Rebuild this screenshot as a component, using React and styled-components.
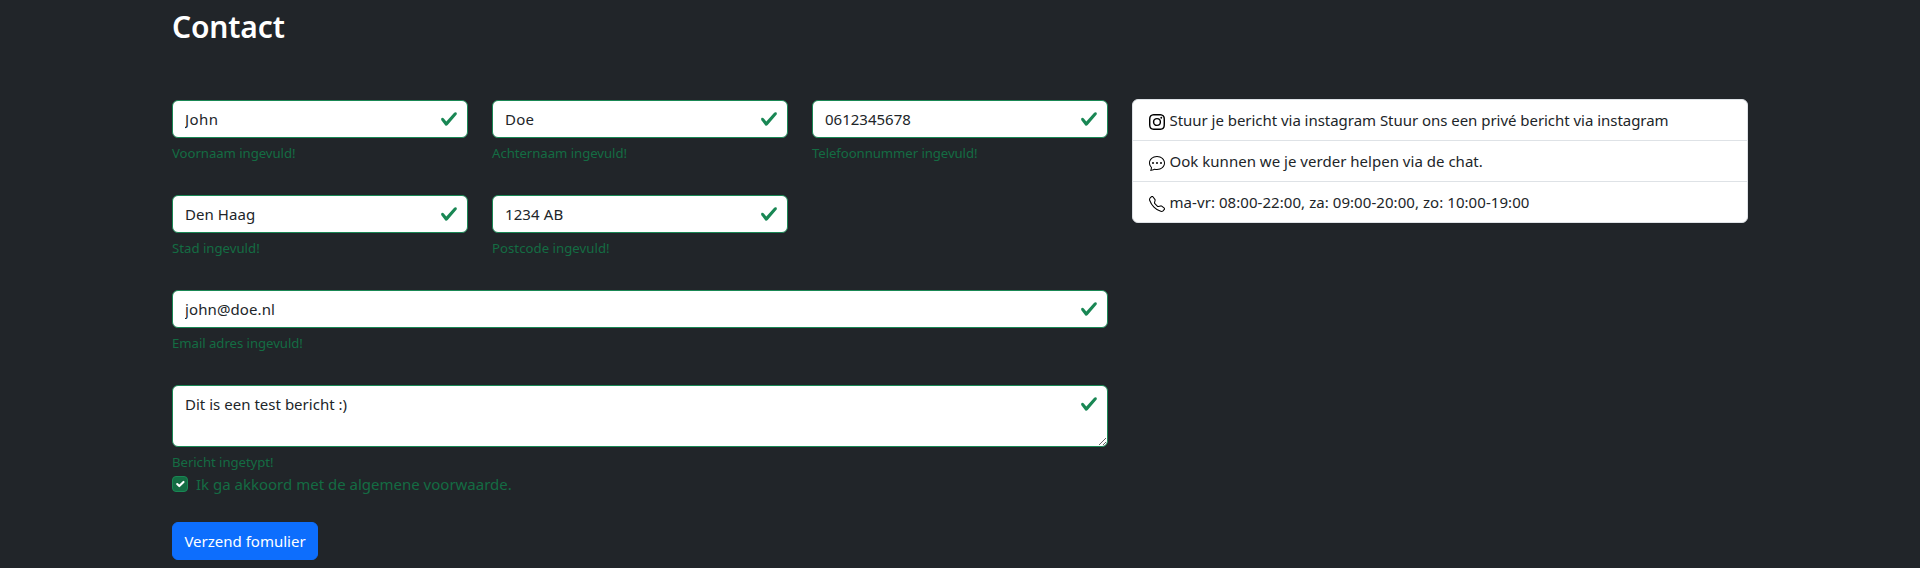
import React from 'react';
import styled, { createGlobalStyle } from 'styled-components';
import { BsInstagram, BsChatDots, BsTelephone } from 'react-icons/bs';

const GlobalStyle = createGlobalStyle`
  *, *::before, *::after { box-sizing: border-box; }
  html { background: #212529; overflow: hidden; }
  body {
    margin: 0;
    background: #212529;
    color: #212529;
    font-family: "Noto Sans", "Open Sans", sans-serif;
    font-size: 15px;
    line-height: 24px;
  }
`;

const Container = styled.main`
  width: 1600px;
  height: 568px;
  margin: 0 auto;
  padding: 8px 12px 0;
  overflow: hidden;
`;

const Title = styled.h2`
  margin: 0;
  height: 38px;
  color: #fff;
  font-size: 30px;
  font-weight: 600;
  line-height: 38px;
  letter-spacing: -0.15px;
`;

const Columns = styled.div`
  display: flex;
  align-items: flex-start;
  gap: 24px;
  padding-top: 53px;
`;

const Form = styled.form`
  width: 936px;
  padding-top: 1px;
`;

const FieldRow = styled.div`
  display: grid;
  grid-template-columns: ${(p) => (p.$full ? '1fr' : 'repeat(3, 1fr)')};
  column-gap: 24px;
  margin-bottom: ${(p) => (p.$last ? 0 : 32)}px;
`;

const ControlBox = styled.div`
  position: relative;
  display: flex;
`;

const Input = styled.input`
  width: 100%;
  height: ${(p) => p.$height || 38}px;
  margin: 0;
  padding: 6px 36px 6px 12px;
  border: 1px solid #198754;
  border-radius: 6px;
  outline: 0;
  background: #fff;
  color: #212529;
  font: inherit;
  letter-spacing: ${(p) => p.$spacing || 0}px;
  resize: vertical;
`;

const ValidMark = styled.svg`
  position: absolute;
  top: 10px;
  right: 10px;
  width: 18px;
  height: 18px;
  fill: #198754;
`;

const Feedback = styled.div`
  padding-top: 5px;
  height: 25px;
  color: #146c43;
  font-size: 13.2px;
  line-height: 21px;
  letter-spacing: ${(p) => p.$spacing || 0}px;
`;

const Agreement = styled.label`
  display: flex;
  align-items: flex-start;
  gap: 8px;
  height: 24px;
  color: #146c43;
`;

const CheckBox = styled.span`
  display: flex;
  width: 16px;
  height: 16px;
  margin-top: 4px;
  border: 1px solid #198754;
  border-radius: 4px;
  background: #146c43;

  svg { width: 14px; height: 14px; }
`;

const SubmitButton = styled.button`
  width: 146px;
  height: 38px;
  margin-top: 26px;
  padding: 0;
  border: 1px solid #0d6efd;
  border-radius: 6px;
  background: #0d6efd;
  color: #fff;
  font: inherit;
`;

const InfoList = styled.ul`
  width: 616px;
  margin: 0;
  padding: 0;
  list-style: none;
  overflow: hidden;
  border: 1px solid #dee2e6;
  border-radius: 6px;
  background: #fff;
`;

const InfoItem = styled.li`
  display: flex;
  align-items: flex-start;
  gap: 4.5px;
  padding: 8px 16px;
  height: 41px;
  white-space: nowrap;
  letter-spacing: ${(p) => p.$spacing || 0}px;

  & + & { border-top: 1px solid #dee2e6; }
  &:first-child { height: 40px; }

  svg { width: 16px; height: 16px; margin-top: 6px; flex: none; color: #000; }
`;

function Field({ value, message, spacing, messageSpacing, multiline }) {
  return (
    <div>
      <ControlBox>
        <Input
          as={multiline ? 'textarea' : 'input'}
          defaultValue={value}
          $spacing={spacing}
          $height={multiline ? 62 : 38}
        />
        <ValidMark viewBox="0 0 8 8">
          <path d="M2.3 6.73.6 4.53c-.4-1.04.46-1.4 1.1-.8l1.1 1.4 3.4-3.8c.6-.63 1.6-.27 1.2.7l-4 4.6c-.43.5-.8.4-1.1.1z" />
        </ValidMark>
      </ControlBox>
      <Feedback $spacing={messageSpacing}>{message}</Feedback>
    </div>
  );
}

export default function App() {
  return (
    <>
      <GlobalStyle />
      <Container>
        <Title>Contact</Title>
        <Columns>
          <Form onSubmit={(e) => e.preventDefault()}>
            <FieldRow>
              <Field value="John" spacing={0.4} message="Voornaam ingevuld!" messageSpacing={-0.06} />
              <Field value="Doe" spacing={0.2} message="Achternaam ingevuld!" messageSpacing={-0.05} />
              <Field value="0612345678" message="Telefoonnummer ingevuld!" messageSpacing={-0.08} />
            </FieldRow>
            <FieldRow>
              <Field value="Den Haag" spacing={0.05} message="Stad ingevuld!" />
              <Field value="1234 AB" spacing={0.1} message="Postcode ingevuld!" messageSpacing={0.03} />
            </FieldRow>
            <FieldRow $full>
              <Field value="john@doe.nl" spacing={0.1} message="Email adres ingevuld!" messageSpacing={-0.05} />
            </FieldRow>
            <FieldRow $full $last>
              <Field multiline value="Dit is een test bericht :)" spacing={0.02} message="Bericht ingetypt!" messageSpacing={-0.06} />
            </FieldRow>
            <Agreement>
              <CheckBox>
                <svg viewBox="0 0 20 20" fill="none" stroke="#fff" strokeWidth="3" strokeLinecap="round" strokeLinejoin="round">
                  <path d="m6 10 3 3 6-6" />
                </svg>
              </CheckBox>
              <span>Ik ga akkoord met de algemene voorwaarde.</span>
            </Agreement>
            <SubmitButton type="submit">Verzend fomulier</SubmitButton>
          </Form>
          <InfoList>
            <InfoItem $spacing={-0.035}>
              <BsInstagram />
              <span>Stuur je bericht via instagram Stuur ons een privé bericht via instagram</span>
            </InfoItem>
            <InfoItem $spacing={0.02}>
              <BsChatDots />
              <span>Ook kunnen we je verder helpen via de chat.</span>
            </InfoItem>
            <InfoItem $spacing={0.06}>
              <BsTelephone />
              <span>ma-vr: 08:00-22:00, za: 09:00-20:00, zo: 10:00-19:00</span>
            </InfoItem>
          </InfoList>
        </Columns>
      </Container>
    </>
  );
}
